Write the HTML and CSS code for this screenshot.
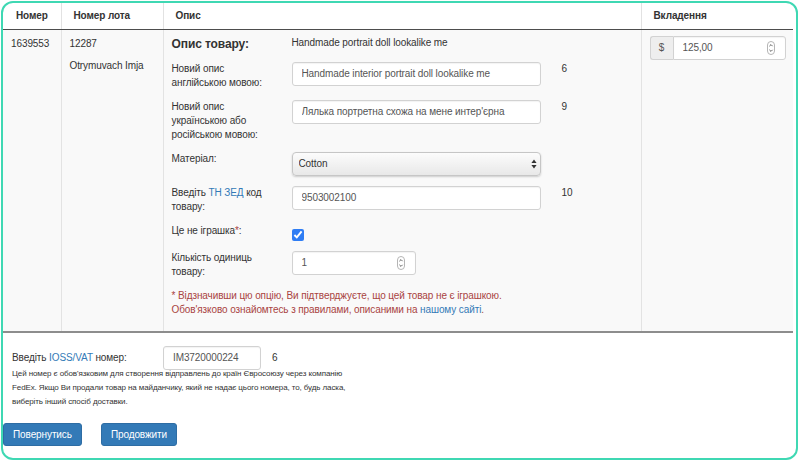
FILE: index.html
```html
<!DOCTYPE html>
<html lang="uk">
<head>
<meta charset="utf-8">
<title>Відправлення</title>
<link rel="stylesheet" href="styles.css">
</head>
<body>
<div class="frame">
  <table class="items">
    <colgroup>
      <col class="w-num"><col class="w-lot"><col class="w-desc"><col class="w-att">
    </colgroup>
    <thead>
      <tr><th>Номер</th><th>Номер лота</th><th>Опис</th><th>Вкладення</th></tr>
    </thead>
    <tbody>
      <tr>
        <td class="c-num">1639553</td>
        <td class="c-lot"><p>12287</p><p class="recipient">Otrymuvach Imja</p></td>
        <td class="c-desc">
          <div class="frow head">
            <span class="lbl title">Опис товару:</span>
            <span class="val">Handmade portrait doll lookalike me</span>
          </div>
          <div class="frow">
            <label class="lbl">Новий опис англійською мовою:</label>
            <input class="field wide" type="text" value="Handmade interior portrait doll lookalike me">
            <span class="cnt">6</span>
          </div>
          <div class="frow">
            <label class="lbl">Новий опис українською або російською мовою:</label>
            <input class="field wide" type="text" value="Лялька портретна схожа на мене интер'єрна">
            <span class="cnt">9</span>
          </div>
          <div class="frow">
            <label class="lbl">Матеріал:</label>
            <span class="select-wrap">
              <select class="select"><option>Cotton</option></select>
              <svg class="select-arrows" width="6" height="10" viewBox="0 0 6 10"><path d="M3 0.5 L5.6 4 H0.4 Z M3 9.5 L5.6 6 H0.4 Z" fill="#333"/></svg>
            </span>
          </div>
          <div class="frow">
            <label class="lbl">Введіть <a href="#">ТН ЗЕД</a> код<br>товару:</label>
            <input class="field wide" type="text" value="9503002100">
            <span class="cnt">10</span>
          </div>
          <div class="frow">
            <label class="lbl">Це не іграшка<span class="req">*</span>:</label>
            <input class="check" type="checkbox" checked>
          </div>
          <div class="frow">
            <label class="lbl">Кількість одиниць товару:</label>
            <span class="num-wrap qty">
              <input class="field" type="text" value="1">
              <svg class="spin" width="8" height="14" viewBox="0 0 8 14"><rect x="0.5" y="0.5" width="7" height="13" rx="3.5" fill="#fff" stroke="#b5b5b5"/><path d="M2.4 5.2 L4 3.6 L5.6 5.2 M2.4 8.8 L4 10.4 L5.6 8.8" fill="none" stroke="#555" stroke-width="0.9"/></svg>
            </span>
          </div>
          <p class="note">* Відзначивши цю опцію, Ви підтверджуєте, що цей товар не є іграшкою.<br>Обов'язково ознайомтесь з правилами, описаними на <a href="#">нашому сайті</a>.</p>
        </td>
        <td class="c-att">
          <div class="input-group">
            <span class="addon">$</span>
            <span class="num-wrap grow">
              <input class="field flat" type="text" value="125,00">
              <svg class="spin" width="8" height="14" viewBox="0 0 8 14"><rect x="0.5" y="0.5" width="7" height="13" rx="3.5" fill="#fff" stroke="#b5b5b5"/><path d="M2.4 5.2 L4 3.6 L5.6 5.2 M2.4 8.8 L4 10.4 L5.6 8.8" fill="none" stroke="#555" stroke-width="0.9"/></svg>
            </span>
          </div>
        </td>
      </tr>
    </tbody>
  </table>

  <div class="ioss">
    <div class="ioss-row">
      <label class="ioss-lbl">Введіть <a href="#">IOSS/VAT</a> номер:</label>
      <input class="field ioss-input" type="text" value="IM3720000224">
      <span class="ioss-cnt">6</span>
    </div>
    <p class="help">Цей номер є обов'язковим для створення відправлень до країн Євросоюзу через компанію<br>FedEx. Якщо Ви продали товар на майданчику, який не надає цього номера, то, будь ласка,<br>виберіть інший спосіб доставки.</p>
  </div>

  <div class="actions">
    <button class="btn" type="button">Повернутись</button>
    <button class="btn" type="button">Продовжити</button>
  </div>
</div>
</body>
</html>
```

FILE: styles.css
```css
body {
  margin: 0;
  background: #fff;
  color: #333;
  font-family: "Liberation Sans", Arial, sans-serif;
  font-size: 10px;
  letter-spacing: -0.1px;
}

a {
  color: #337ab7;
  text-decoration: none;
}

.frame {
  margin: 1px;
  width: 797px;
  height: 459px;
  box-sizing: border-box;
  border: 2px solid #3fd8b3;
  border-radius: 12px;
  overflow: hidden;
}

/* shipment table */
.items {
  width: 790px;
  border-collapse: collapse;
  table-layout: fixed;
}
.w-num { width: 58px; }
.w-lot { width: 102px; }
.w-desc { width: 478px; }
.w-att { width: 152px; }

.items th {
  height: 26px;
  padding: 0 0 0 12px;
  text-align: left;
  font-weight: bold;
  border-bottom: 1px solid #4d4d4d;
  border-left: 1px solid #e2e2e2;
  box-sizing: border-box;
}
.items th:first-child {
  padding-left: 13px;
  border-left: 0;
}

.items td {
  vertical-align: top;
  background: #f9f9f9;
  padding: 6px 8px 14px;
  border-left: 1px solid #e3e3e3;
  border-bottom: 2px solid #8d8d8d;
  line-height: 16px;
}
.items td:first-child {
  border-left: 0;
}

.c-lot p {
  margin: 0 0 6px;
}

/* description form */
.frow {
  display: flex;
  align-items: flex-start;
  margin-bottom: 10px;
  line-height: 14px;
}
.frow.head {
  align-items: center;
}
.lbl {
  flex: none;
  width: 100px;
  margin-right: 20px;
}
.lbl.title {
  font-size: 12px;
  font-weight: bold;
  line-height: 16px;
}
.val {
  line-height: 14px;
  margin-top: -2px;
}
.req {
  color: #a94442;
}

.field {
  box-sizing: border-box;
  height: 24px;
  padding: 0 9px;
  border: 1px solid #d2d2d2;
  border-radius: 3px;
  background: #fff;
  color: #555;
  font: inherit;
  letter-spacing: inherit;
  box-shadow: inset 0 1px 1px rgba(0, 0, 0, 0.05);
}
.field.wide {
  width: 249px;
}
.cnt {
  margin-left: 21px;
  line-height: 14px;
}

.select-wrap {
  position: relative;
  display: block;
  width: 249px;
}
.select {
  display: block;
  width: 100%;
  height: 24px;
  padding: 0 6px;
  -webkit-appearance: none;
  appearance: none;
  border: 1px solid #c6c6c6;
  border-radius: 4px;
  background: linear-gradient(#fcfcfc, #e8e8e8);
  box-shadow: 0 1px 2px rgba(0, 0, 0, 0.18);
  color: #333;
  font: inherit;
  letter-spacing: inherit;
}
.select-arrows {
  position: absolute;
  right: 4px;
  top: 7px;
}

.check {
  width: 12px;
  height: 12px;
  margin: 5px 0 0 0;
  accent-color: #2f7df4;
}

.num-wrap {
  position: relative;
  display: block;
}
.num-wrap.qty {
  width: 124px;
}
.num-wrap.qty .field {
  width: 100%;
}
.spin {
  position: absolute;
  right: 11px;
  top: 5px;
}

.note {
  margin: 0;
  color: #a94442;
  line-height: 14px;
}

/* attachment value */
.input-group {
  display: flex;
  width: 136px;
}
.addon {
  box-sizing: border-box;
  width: 23px;
  height: 24px;
  line-height: 22px;
  text-align: center;
  color: #555;
  background: #eee;
  border: 1px solid #d2d2d2;
  border-right: 0;
  border-radius: 3px 0 0 3px;
}
.num-wrap.grow {
  flex: 1;
}
.field.flat {
  width: 100%;
  border-radius: 0 3px 3px 0;
}
.num-wrap.grow .spin {
  right: 11px;
}

/* IOSS block */
.ioss {
  padding: 13px 0 0 9px;
}
.ioss-row {
  display: flex;
  align-items: center;
}
.ioss-lbl {
  width: 151px;
}
.ioss-input {
  width: 98px;
}
.ioss-cnt {
  margin-left: 11px;
}
.help {
  margin: -3px 0 0;
  font-size: 8px;
  line-height: 14px;
}

.actions {
  display: flex;
  gap: 19px;
  margin-top: 14px;
}
.btn {
  height: 23px;
  padding: 0 9px;
  border: 1px solid #2e6da4;
  border-radius: 3px;
  background: #337ab7;
  color: #fff;
  font: inherit;
  letter-spacing: inherit;
}
```
